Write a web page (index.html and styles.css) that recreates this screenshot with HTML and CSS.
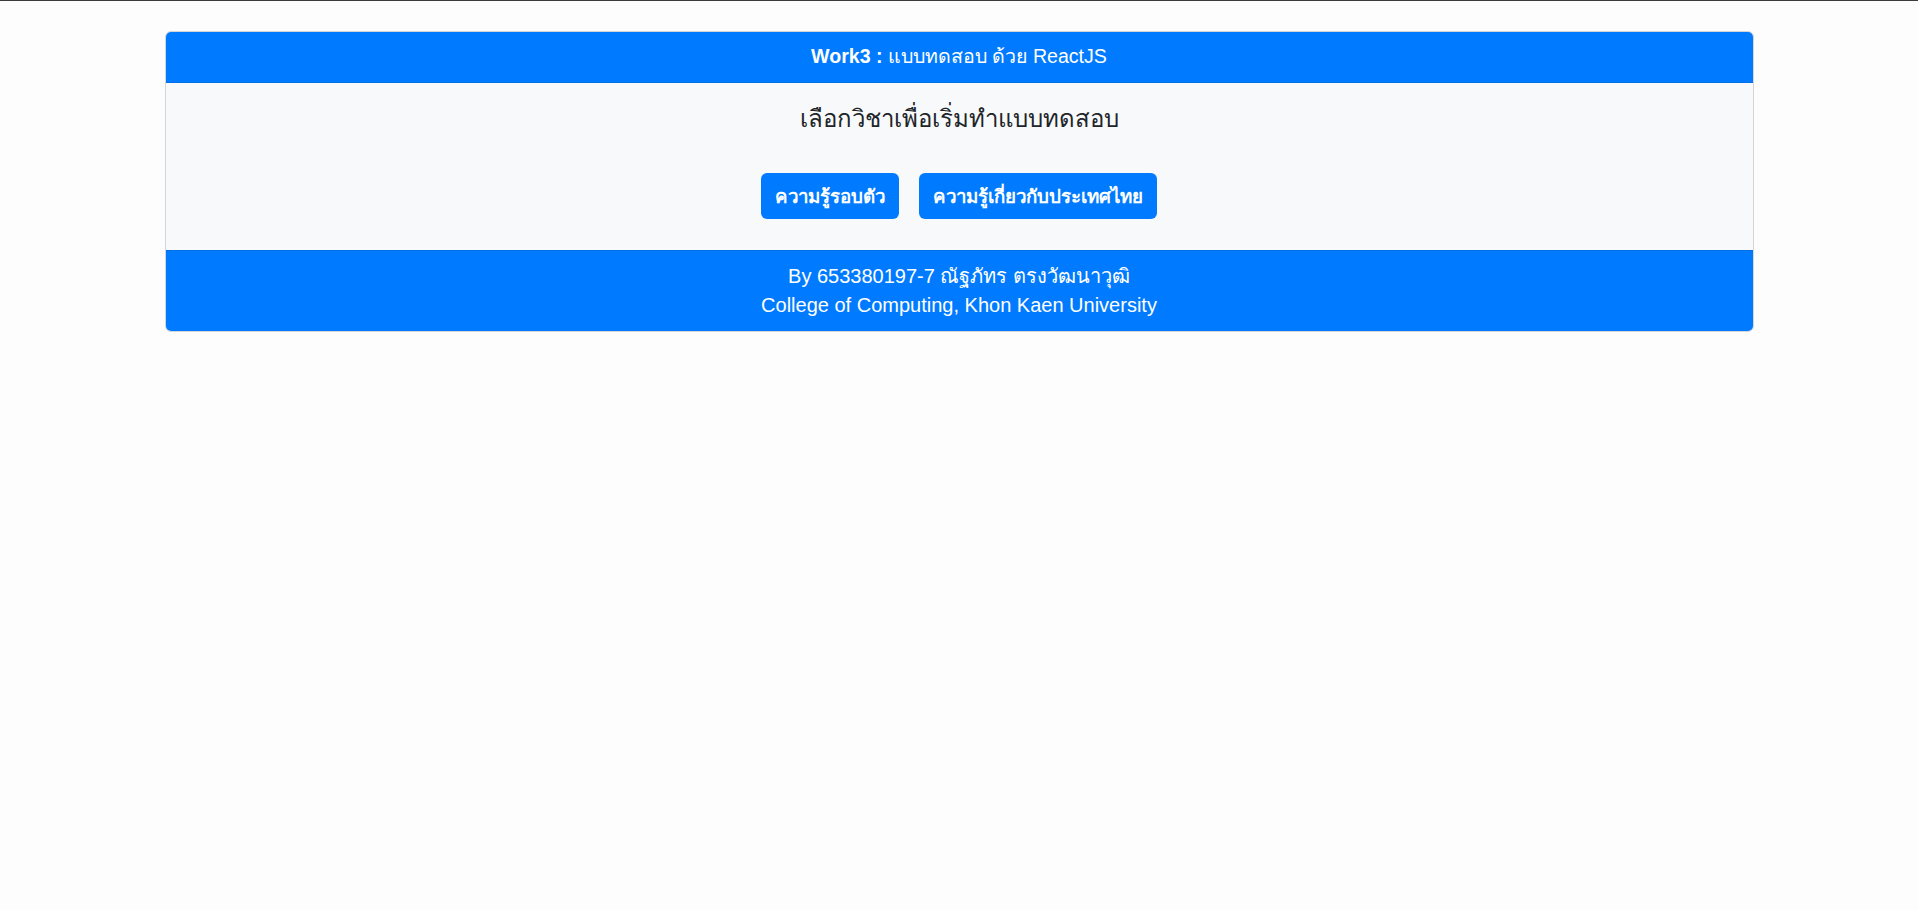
FILE: index.html
```html
<!DOCTYPE html>
<html lang="th">
<head>
<meta charset="utf-8">
<title>Work3</title>
<link rel="stylesheet" href="styles.css">
</head>
<body>
<div class="topline"></div>
<div class="page">
  <div class="card">
    <div class="card-header"><b>Work3 :</b> แบบทดสอบ ด้วย ReactJS</div>
    <div class="card-body">
      <h2 class="title">เลือกวิชาเพื่อเริ่มทำแบบทดสอบ</h2>
      <div class="buttons">
        <button class="btn">ความรู้รอบตัว</button>
        <button class="btn">ความรู้เกี่ยวกับประเทศไทย</button>
      </div>
    </div>
    <div class="card-footer">
      <div>By 653380197-7 ณัฐภัทร ตรงวัฒนาวุฒิ</div>
      <div>College of Computing, Khon Kaen University</div>
    </div>
  </div>
</div>
</body>
</html>
```

FILE: styles.css
```css
html, body {
  margin: 0;
  padding: 0;
  background: #fdfdfd;
  font-family: "Liberation Sans", Arial, "Noto Sans", sans-serif;
  color: #212529;
}
.topline {
  height: 1px;
  background: #3c3c3c;
}
.page {
  padding-top: 30px;
  display: flex;
  justify-content: center;
}
.card {
  width: 1589px;
  box-sizing: border-box;
  border: 1px solid #d3d5d8;
  border-radius: 6px;
  overflow: hidden;
  background: #f8f9fa;
}
.card-header {
  background: #007bff;
  color: #fff;
  text-align: center;
  font-size: 19.6px;
  line-height: 27px;
  padding: 11px 12px 12px;
  border-bottom: 1px solid #006ee6;
}
.card-header b {
  font-weight: 700;
}
.card-body {
  padding: 21px 12px 31px;
  text-align: center;
}
.title {
  margin: 0;
  font-size: 24px;
  font-weight: 400;
  line-height: 29px;
  color: #212529;
}
.buttons {
  margin-top: 40px;
  display: flex;
  justify-content: center;
  gap: 20px;
}
.btn {
  font-family: inherit;
  background: #007bff;
  color: #fff;
  border: none;
  border-radius: 6px;
  height: 46px;
  padding: 0 14px;
  font-size: 18.7px;
  font-weight: 700;
  cursor: pointer;
}
.card-footer {
  background: #007bff;
  color: #fff;
  text-align: center;
  font-size: 20px;
  line-height: 29px;
  padding: 11px 12px 11px;
  border-top: 1px solid #006ee6;
}
```
